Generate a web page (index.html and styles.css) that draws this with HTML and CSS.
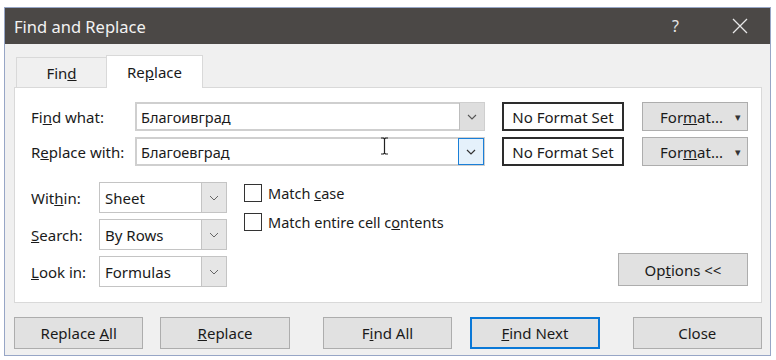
FILE: index.html
```html
<!DOCTYPE html>
<html lang="en">
<head>
  <meta charset="UTF-8" />
  <title>Find and Replace</title>
  <link rel="stylesheet" href="styles.css">
</head>
<body>
  <div class="window">
    <div class="titlebar">
      <span class="title">Find and Replace</span>
      <span class="help">?</span>
      <svg class="close-x" width="16" height="16" viewBox="0 0 16 16"><path d="M1 1 L15 15 M15 1 L1 15" stroke="#e8e8e8" stroke-width="1.3" fill="none"/></svg>
    </div>
    <div class="dialog">
      <div class="tabs">
        <div class="tab"><span>Fin<u>d</u></span></div>
        <div class="tab active"><span>Re<u>p</u>lace</span></div>
      </div>
      <div class="panel">
        <div class="find-row">
          <span class="field-label">Fi<u>n</u>d what:</span>
          <div class="combo"><span class="combo-text">Благоивград</span><span class="drop"><svg width="10" height="6" viewBox="0 0 10 6"><path d="M1 1 L5 5 L9 1" stroke="#555" stroke-width="1.1" fill="none"/></svg></span></div>
          <div class="no-format">No Format Set</div>
          <div class="btn format-btn"><span>For<u>m</u>at...</span><span class="caret">▾</span></div>
        </div>
        <div class="find-row">
          <span class="field-label">R<u>e</u>place with:</span>
          <div class="combo focus"><span class="combo-text">Благоевград</span><span class="drop"><svg width="10" height="6" viewBox="0 0 10 6"><path d="M1 1 L5 5 L9 1" stroke="#333" stroke-width="1.2" fill="none"/></svg></span>
            <svg class="ibeam" width="9" height="18" viewBox="0 0 9 18"><path d="M1 1 H3.5 L4.5 2 L5.5 1 H8 M4.5 2 V16 M1 17 H3.5 L4.5 16 L5.5 17 H8" stroke="#222" stroke-width="1.2" fill="none"/></svg>
          </div>
          <div class="no-format">No Format Set</div>
          <div class="btn format-btn"><span>For<u>m</u>at...</span><span class="caret">▾</span></div>
        </div>

        <div class="options-area">
          <div class="opt-rows">
            <div class="opt-row"><span class="opt-label">Wit<u>h</u>in:</span><div class="select"><span>Sheet</span><span class="drop"><svg width="10" height="6" viewBox="0 0 10 6"><path d="M1 1 L5 5 L9 1" stroke="#666" stroke-width="1" fill="none"/></svg></span></div></div>
            <div class="opt-row"><span class="opt-label"><u>S</u>earch:</span><div class="select"><span>By Rows</span><span class="drop"><svg width="10" height="6" viewBox="0 0 10 6"><path d="M1 1 L5 5 L9 1" stroke="#666" stroke-width="1" fill="none"/></svg></span></div></div>
            <div class="opt-row"><span class="opt-label"><u>L</u>ook in:</span><div class="select"><span>Formulas</span><span class="drop"><svg width="10" height="6" viewBox="0 0 10 6"><path d="M1 1 L5 5 L9 1" stroke="#666" stroke-width="1" fill="none"/></svg></span></div></div>
          </div>
          <div class="checks">
            <label class="check"><span class="box"></span><span>Match <u>c</u>ase</span></label>
            <label class="check"><span class="box"></span><span>Match entire cell c<u>o</u>ntents</span></label>
          </div>
          <div class="btn options-btn"><span>Op<u>t</u>ions &lt;&lt;</span></div>
        </div>
      </div>
      <div class="actions">
        <div class="btn action replace-all"><span>Replace <u>A</u>ll</span></div>
        <div class="btn action replace"><span><u>R</u>eplace</span></div>
        <div class="btn action find-all"><span>F<u>i</u>nd All</span></div>
        <div class="btn action find-next default"><span><u>F</u>ind Next</span></div>
        <div class="btn action close"><span>Close</span></div>
      </div>
    </div>
  </div>
</body>
</html>
```

FILE: styles.css
```css
body { margin: 0; background: #fff; font-family: 'Noto Sans', sans-serif; color: #1a1a1a; }
.window { margin: 7px 0 0 4px; width: 767px; height: 349px; box-sizing: border-box; border: 1px solid #97a6c6; background: #f0f0f0; }
.titlebar { height: 36px; background: #4b4846; display: flex; align-items: center; padding-left: 9px; }
.title { color: #f2f2f2; font-size: 16.5px; flex: 1; }
.help { color: #e6e6e6; font-size: 16px; margin-right: 53px; }
.close-x { margin-right: 22px; }

.dialog { padding: 11px 8px 0 9px; }
.tabs { display: flex; align-items: flex-end; padding-left: 2px; height: 32px; position: relative; z-index: 1; }
.tab { width: 90px; height: 30px; box-sizing: border-box; border: 1px solid #d9d9d9; border-right: none; border-bottom: none; display: flex; align-items: center; justify-content: center; font-size: 15px; }
.tab.active { width: 97px; height: 33px; background: #fff; border-right: 1px solid #d9d9d9; margin-bottom: -1px; padding-bottom: 1px; }

.panel { height: 216px; box-sizing: border-box; background: #fff; border: 1px solid #d9d9d9; padding: 14px 13px 0 16px; }
.find-row { display: flex; align-items: center; height: 29px; margin-bottom: 6px; }
.field-label { width: 104px; font-size: 15px; }
.combo { width: 350px; height: 29px; box-sizing: border-box; border: 2px solid #cfcfcf; display: flex; align-items: stretch; position: relative; }
.combo-text { flex: 1; font-size: 14.5px; padding-left: 4px; display: flex; align-items: center; }
.combo .drop { width: 24px; background: #dedede; border-left: 1px solid #bdbdbd; display: flex; align-items: center; justify-content: center; margin: -1px -1px -1px 0; }
.combo.focus .drop { background: #e5f1fb; border: 1px solid #1a7fd8; }
.ibeam { position: absolute; left: 243px; top: -2px; }
.no-format { margin-left: 17px; width: 122px; height: 29px; box-sizing: border-box; border: 2px solid #2d2d2d; display: flex; align-items: center; justify-content: center; font-size: 15px; }
.btn { background: #e1e1e1; border: 1px solid #adadad; box-sizing: border-box; display: flex; align-items: center; justify-content: center; font-size: 15px; }
.format-btn { margin-left: 18px; width: 106px; height: 29px; justify-content: flex-end; padding-right: 6px; }
.caret { font-size: 11px; margin-left: 12px; color: #333; }

.options-area { display: flex; margin-top: 16px; }
.opt-rows { display: flex; flex-direction: column; gap: 6px; }
.opt-row { display: flex; align-items: center; }
.opt-label { width: 68px; font-size: 15px; }
.select { width: 128px; height: 31px; box-sizing: border-box; border: 1px solid #c4c4c4; display: flex; font-size: 15px; }
.select span:first-child { flex: 1; display: flex; align-items: center; padding-left: 5px; }
.select .drop { width: 24px; background: #e6e6e6; border-left: 1px solid #c4c4c4; display: flex; align-items: center; justify-content: center; }
.checks { margin-left: 17px; display: flex; flex-direction: column; gap: 11px; padding-top: 2px; }
.check { display: flex; align-items: center; font-size: 14.5px; height: 18px; }
.box { width: 18px; height: 18px; box-sizing: border-box; border: 1px solid #333; margin-right: 6px; background: #fff; }
.options-btn { margin-left: auto; align-self: flex-end; width: 130px; height: 33px; margin-bottom: 1px; }

.actions { display: flex; margin-top: 14px; }
.action { width: 130px; height: 32px; }
.replace { margin-left: 17px; }
.find-all { margin-left: 33px; }
.find-next { margin-left: 18px; }
.close { margin-left: 33px; }
.default { border: 2px solid #0a78d7; }
```
